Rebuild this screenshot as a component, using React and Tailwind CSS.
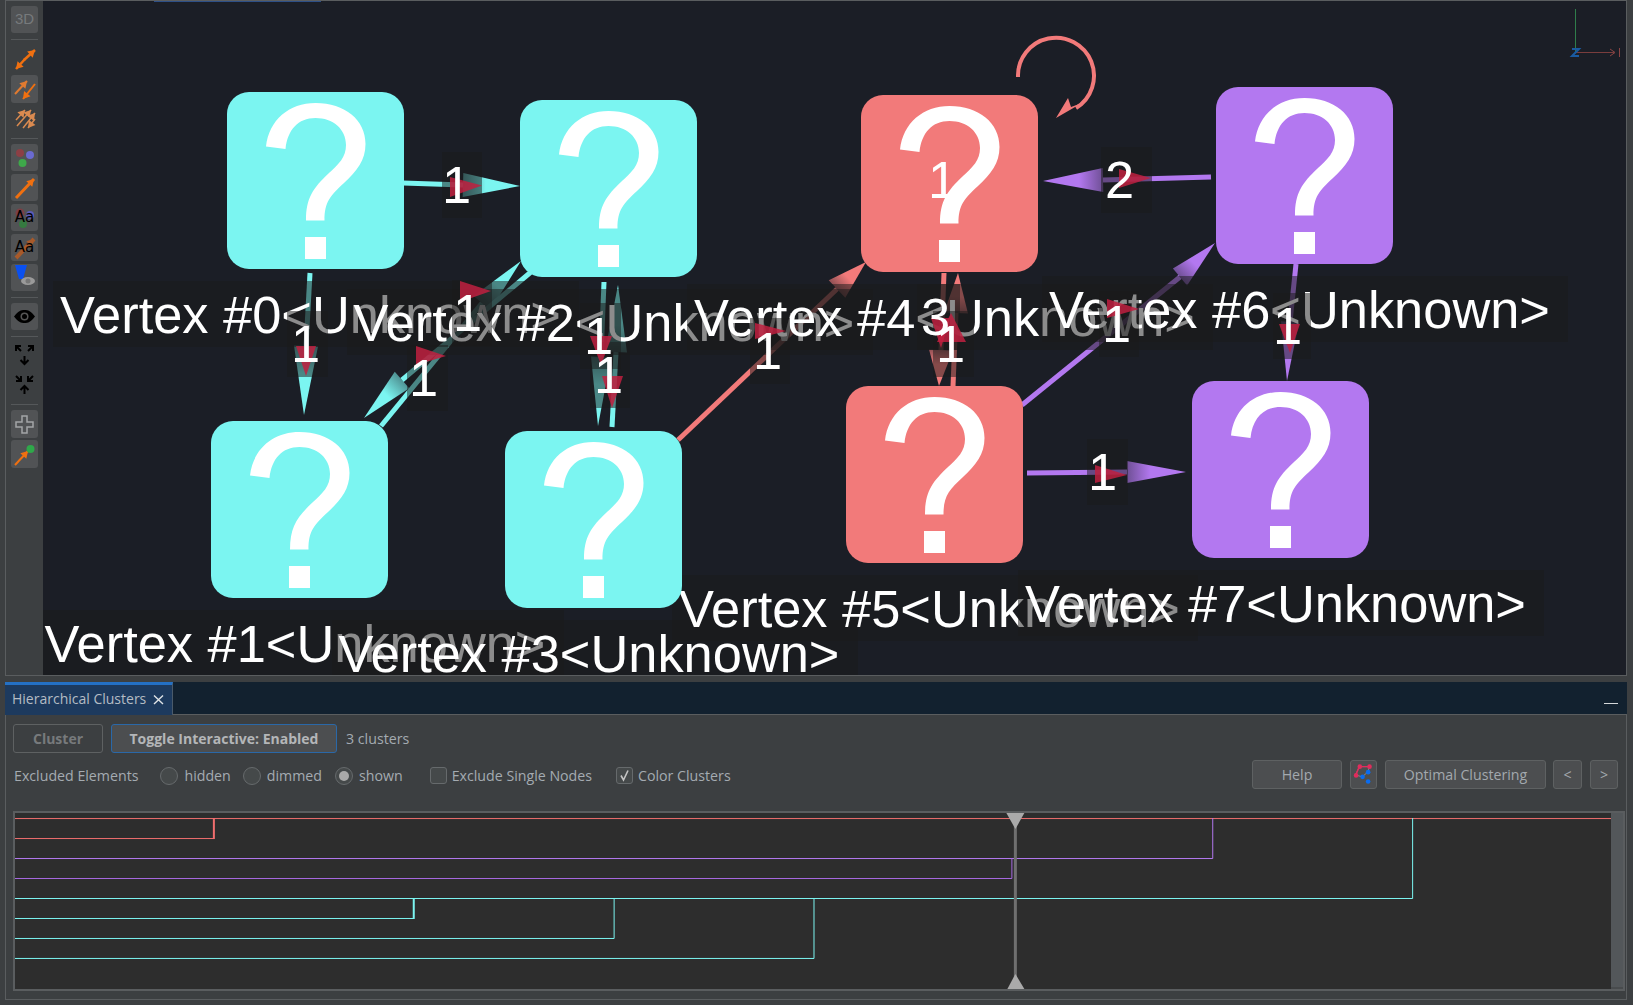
import React from 'react';

const CYAN = '#7bf5f1';
const SALMON = '#f27a7a';
const PURPLE = '#b378f0';

// graph positions are page pixels, the canvas starts at x=43 y=1
const OX = 43;
const OY = 1;

const vertices = [
  { id: 0, x: 226.5, y: 91.5, color: CYAN },
  { id: 1, x: 211, y: 421, color: CYAN },
  { id: 2, x: 520, y: 100, color: CYAN },
  { id: 3, x: 505, y: 431, color: CYAN },
  { id: 4, x: 860.5, y: 95, color: SALMON },
  { id: 5, x: 845.5, y: 386, color: SALMON },
  { id: 6, x: 1215.5, y: 86.5, color: PURPLE },
  { id: 7, x: 1191.5, y: 381, color: PURPLE },
];

// start, tip, centre of the head's base, half width of that base
const edges = [
  { from: [403, 183], tip: [520, 186], base: [463, 185], half: 12, color: CYAN },
  { from: [310, 273], tip: [304, 415], base: [306, 346], half: 12, color: CYAN },
  { from: [531, 272], tip: [364, 418], base: [402, 380], half: 11, color: CYAN },
  { from: [381, 426], tip: [521, 261], base: [482, 303], half: 11, color: CYAN },
  { from: [604, 282], tip: [598, 426], base: [601, 357], half: 10, color: CYAN },
  { from: [612, 427], tip: [618, 285], base: [616, 352], half: 11, color: CYAN },
  { from: [678, 440], tip: [866, 262], base: [837, 289], half: 12, color: SALMON },
  { from: [1022, 405], tip: [1215, 243], base: [1180, 277], half: 11, color: PURPLE },
  { from: [1296, 264], tip: [1287, 381], base: [1290, 322], half: 9, color: PURPLE },
  { from: [1027, 473], tip: [1186, 472], base: [1127, 472], half: 11, color: PURPLE },
  { from: [1211, 177], tip: [1043, 181], base: [1103, 180], half: 12, color: PURPLE },
  { from: [944, 273], tip: [939, 386], base: [941, 350], half: 12, color: SALMON },
  { from: [953, 386], tip: [958, 273], base: [956, 313], half: 12, color: SALMON },
];

const redMarks = [
  '450,177 482,185.5 450,197',
  '296,346 316,346 306,376',
  '460,281 491,291 460,302',
  '416,346 446,356 416,365',
  '590,336 612,336 601,365',
  '602,376 623,376 612,408',
  '755,323 786,331 755,339',
  '1107,299 1139,309 1107,318',
  '1279,324 1300,324 1290,353',
  '1095,465 1127,475 1095,483',
  '1119,169 1151,178 1119,188',
  '931,318 950,318 941,348',
  '937,342 966,342 951,313',
];

// box left, box right, box centre y, text left
const edgeLabels = [
  { l: 442, r: 482, cy: 184.5, tx: 442, text: '1' },
  { l: 287, r: 328, cy: 344, tx: 291, text: '1' },
  { l: 452, r: 492, cy: 313, tx: 453, text: '1' },
  { l: 407, r: 448, cy: 378, tx: 409, text: '1' },
  { l: 580, r: 621, cy: 336, tx: 584, text: '1' },
  { l: 590, r: 630, cy: 375, tx: 594, text: '1' },
  { l: 750, r: 790, cy: 351, tx: 753, text: '1' },
  { l: 1099, r: 1139, cy: 324, tx: 1102, text: '1' },
  { l: 1273, r: 1311, cy: 326, tx: 1273, text: '1' },
  { l: 1087, r: 1128, cy: 472, tx: 1088, text: '1' },
  { l: 1101, r: 1152, cy: 180, tx: 1105, text: '2' },
  { l: 917, r: 960, cy: 317, tx: 921, text: '3' },
  { l: 933, r: 974, cy: 344, tx: 936, text: '1' },
  { cy: 180, tx: 928, text: '1' },
];

function headPoints(e) {
  const dx = e.tip[0] - e.from[0];
  const dy = e.tip[1] - e.from[1];
  const len = Math.hypot(dx, dy);
  const nx = (-dy / len) * e.half;
  const ny = (dx / len) * e.half;
  return `${e.tip[0]},${e.tip[1]} ${e.base[0] + nx},${e.base[1] + ny} ${e.base[0] - nx},${e.base[1] - ny}`;
}

function Vertex({ v }) {
  return (
    <div
      className="absolute w-[177px] h-[177px] rounded-[22px]"
      style={{ left: v.x - OX, top: v.y - OY, backgroundColor: v.color }}
    >
      <svg width="177" height="177" viewBox="0 0 177 177">
        <path
          fill="#fff"
          d="M39 54.5C42 28 62 11 88.5 11C118 11 138.5 28 138.5 52C138.5 68 130 79 117 91C103 104 97.5 110 97.5 128.5L79 128.5C79 106 86 96 102 81C112 72 119 65 119 53C119 37 106 26 88.5 26C71 26 60.5 38 58.5 57Z"
        />
        <rect x="78" y="145" width="21" height="22" fill="#fff" />
      </svg>
    </div>
  );
}

function VertexLabel({ v }) {
  return (
    <div
      className="absolute w-[526px] h-[66px] pl-[7px] pt-px bg-[#1a1a1a]/50 text-white text-[52.4px] leading-[66px] whitespace-nowrap font-['Liberation_Sans',sans-serif]"
      style={{ left: v.x - 173.5 - OX, top: v.y + 177 + 12 - OY }}
    >
      Vertex #{v.id}&lt;Unknown&gt;
    </div>
  );
}

function GraphCanvas() {
  return (
    <div className="relative flex-1 bg-[#1b1e26] overflow-hidden">
      <svg className="absolute inset-0" width="1583" height="674" viewBox={`${OX} ${OY} 1583 674`}>
        <defs>
          {edges.map((e, i) => (
            <linearGradient
              key={i}
              id={`head${i}`}
              gradientUnits="userSpaceOnUse"
              x1={e.base[0]}
              y1={e.base[1]}
              x2={e.tip[0]}
              y2={e.tip[1]}
            >
              <stop offset="0" stopColor={e.color} stopOpacity="0.55" />
              <stop offset="0.4" stopColor={e.color} stopOpacity="1" />
            </linearGradient>
          ))}
        </defs>
        {edges.map((e, i) => (
          <g key={i}>
            <line x1={e.from[0]} y1={e.from[1]} x2={e.base[0]} y2={e.base[1]} stroke={e.color} strokeWidth="5" />
            <polygon points={headPoints(e)} fill={`url(#head${i})`} />
          </g>
        ))}
        <path d="M1018 77A38 38 0 1 1 1076 108" fill="none" stroke={SALMON} strokeWidth="4" />
        <polygon points="1056,118 1068,98 1071,107 1082,103" fill={SALMON} />
        <line x1="1575.5" y1="9" x2="1575.5" y2="52" stroke="#2f7d4a" />
        <line x1="1575" y1="52.5" x2="1614" y2="52.5" stroke="#7a3d3d" />
        <path d="M1610 49L1615 52.5L1610 56" fill="none" stroke="#8a4444" />
        <line x1="1619.5" y1="48" x2="1619.5" y2="57" stroke="#8a4444" />
        <path d="M1572 49H1579L1572 56H1579" fill="none" stroke="#1a5aa0" strokeWidth="2" />
      </svg>
      {vertices.map((v) => (
        <VertexLabel key={v.id} v={v} />
      ))}
      {vertices.map((v) => (
        <Vertex key={v.id} v={v} />
      ))}
      {edgeLabels.filter((b) => b.l).map((b, i) => (
        <div
          key={i}
          className="absolute h-[66px] bg-[#1a1a1a]/50"
          style={{ left: b.l - OX, width: b.r - b.l, top: b.cy - 33 - OY }}
        />
      ))}
      <svg className="absolute inset-0" width="1583" height="674" viewBox={`${OX} ${OY} 1583 674`}>
        {redMarks.map((p, i) => (
          <polygon key={i} points={p} fill="#c0203f" fillOpacity="0.85" />
        ))}
      </svg>
      {edgeLabels.map((b, i) => (
        <div
          key={i}
          className="absolute text-white text-[52.4px] leading-[66px] font-['Liberation_Sans',sans-serif]"
          style={{ left: b.tx - OX, top: b.cy - 33 - OY }}
        >
          {b.text}
        </div>
      ))}
      <div className="absolute top-0 left-[111px] w-[167px] h-px bg-[#2d4f86]" />
    </div>
  );
}

function ToolBtn({ children, plain, size = 'h-[27px]', className = '' }) {
  return (
    <div
      className={`w-[27px] shrink-0 flex items-center justify-center rounded-[3px] ${size} ${plain ? '' : 'bg-[#515355]'} ${className}`}
    >
      {children}
    </div>
  );
}

function Sep({ className = '' }) {
  return <div className={`w-[27px] h-px shrink-0 bg-[#55585a] ${className}`} />;
}

function Arrow({ x1, y1, x2, y2, color = '#f07010', w = 2.5 }) {
  const a = Math.atan2(y2 - y1, x2 - x1);
  const p = (r, t) => `${x2 + r * Math.cos(a + t)},${y2 + r * Math.sin(a + t)}`;
  return (
    <g>
      <line x1={x1} y1={y1} x2={x2} y2={y2} stroke={color} strokeWidth={w} />
      <polygon points={`${x2},${y2} ${p(8, 2.6)} ${p(8, -2.6)}`} fill={color} />
    </g>
  );
}

function Icon({ children }) {
  return (
    <svg width="27" height="27" viewBox="0 0 27 27" className="shrink-0">
      {children}
    </svg>
  );
}

function AaText() {
  return (
    <span className="relative text-black text-[15px] leading-none font-['DejaVu_Sans',sans-serif]">Aa</span>
  );
}

function BlackExpand({ inward }) {
  return (
    <svg width="27" height="24" viewBox="0 0 27 24" className="block">
      <g fill="none" stroke="#000" strokeWidth="2">
        {inward ? (
          <>
            <path d="M5 3L10 8M5 8H10V3" />
            <path d="M22 3L17 8M17 3V8H22" />
            <path d="M13.5 21V13M9.5 17L13.5 13L17.5 17" />
          </>
        ) : (
          <>
            <path d="M10 8L5 3M5 8V3H10" />
            <path d="M17 8L22 3M17 3H22V8" />
            <path d="M13.5 13V21M9.5 17L13.5 21L17.5 17" />
          </>
        )}
      </g>
    </svg>
  );
}

function Toolbar() {
  return (
    <div className="w-[37px] shrink-0 pl-[5px] pt-[5px] flex flex-col">
      <ToolBtn>
        <span className="text-[#777a7c] text-[15px] font-['Liberation_Sans',sans-serif]">3D</span>
      </ToolBtn>
      <Sep className="mt-[6px]" />
      <ToolBtn plain size="h-[18px]" className="mt-[10px]">
        <Icon>
          <Arrow x1={13} y1={14} x2={24} y2={4} />
          <Arrow x1={14} y1={13} x2={5} y2={23} />
        </Icon>
      </ToolBtn>
      <ToolBtn size="h-[28px]" className="mt-[7px]">
        <Icon>
          <Arrow x1={4} y1={18} x2={16} y2={5} color="#e07a30" w={2} />
          <Arrow x1={24} y1={8} x2={12} y2={23} color="#f07010" w={2} />
        </Icon>
      </ToolBtn>
      <ToolBtn plain size="h-[20px]" className="mt-[5px]">
        <Icon>
          <Arrow x1={5} y1={15} x2={14} y2={5} color="#d98a50" w={1.5} />
          <Arrow x1={6} y1={21} x2={20} y2={5} color="#d98a50" w={1.5} />
          <Arrow x1={12} y1={23} x2={24} y2={8} color="#d98a50" w={1.5} />
          <Arrow x1={24} y1={14} x2={17} y2={23} color="#d98a50" w={1.5} />
        </Icon>
      </ToolBtn>
      <Sep className="mt-[10px]" />
      <ToolBtn className="mt-[5px]">
        <Icon>
          <circle cx="9" cy="9" r="4" fill="#8c3f45" />
          <circle cx="19" cy="11" r="4" fill="#6a6ad0" />
          <circle cx="11.5" cy="19" r="4" fill="#3ea84a" />
        </Icon>
      </ToolBtn>
      <ToolBtn className="mt-[3px]">
        <Icon>
          <Arrow x1={5} y1={24} x2={23} y2={5} w={3} />
        </Icon>
      </ToolBtn>
      <ToolBtn className="mt-[3px] relative">
        <svg className="absolute inset-0" width="27" height="27" viewBox="0 0 27 27">
          <circle cx="9" cy="9" r="4.5" fill="#7c3f45" />
          <circle cx="19" cy="11" r="4" fill="#5c5cb8" />
          <circle cx="12" cy="20" r="4" fill="#357a40" />
        </svg>
        <AaText />
      </ToolBtn>
      <ToolBtn className="mt-[3px] relative">
        <svg className="absolute inset-0" width="27" height="27" viewBox="0 0 27 27">
          <Arrow x1={5} y1={24} x2={23} y2={5} color="#a85a2a" w={4} />
        </svg>
        <AaText />
      </ToolBtn>
      <ToolBtn className="mt-[3px]">
        <Icon>
          <polygon points="4,1 16,1 12,15 8,15" fill="#0a50f0" />
          <ellipse cx="17" cy="17" rx="7" ry="4" fill="#9a9a9a" />
          <circle cx="17" cy="17" r="2.5" fill="#777" />
        </Icon>
      </ToolBtn>
      <Sep className="mt-[6px]" />
      <ToolBtn className="mt-[5px]">
        <Icon>
          <path d="M3 13.5C7 8 10 7 13.5 7C17 7 20 8 24 13.5C20 19 17 20 13.5 20C10 20 7 19 3 13.5Z" fill="#000" />
          <circle cx="13.5" cy="13.5" r="4" fill="#555" />
          <circle cx="13.5" cy="13.5" r="2.5" fill="#000" />
        </Icon>
      </ToolBtn>
      <Sep className="mt-[6px]" />
      <div className="mt-[6px] shrink-0"><BlackExpand /></div>
      <div className="mt-[6px] shrink-0"><BlackExpand inward /></div>
      <Sep className="mt-[7px]" />
      <ToolBtn size="h-[28px]" className="mt-[5px]">
        <Icon>
          <path d="M11 5H16V11H22V16H16V22H11V16H5V11H11Z" fill="none" stroke="#a3a5a6" strokeWidth="1.5" />
        </Icon>
      </ToolBtn>
      <ToolBtn size="h-[28px]" className="mt-[2px]">
        <Icon>
          <Arrow x1={4} y1={24} x2={17} y2={10} w={2} />
          <circle cx="19.5" cy="8" r="4" fill="#2fa84a" />
        </Icon>
      </ToolBtn>
    </div>
  );
}

function Radio({ label, checked }) {
  return (
    <label className="flex items-center gap-[6px]">
      <span className="w-[18px] h-[18px] rounded-full border border-[#666a6c] bg-[#45494a] flex items-center justify-center">
        {checked && <span className="w-[10px] h-[10px] rounded-full bg-[#a9a9a9]" />}
      </span>
      {label}
    </label>
  );
}

function Check({ label, checked }) {
  return (
    <label className="flex items-center gap-[5px]">
      <span className="w-[17px] h-[17px] rounded-[3px] border border-[#666a6c] bg-[#45494a] flex items-center justify-center">
        {checked && (
          <svg width="13" height="13" viewBox="0 0 13 13">
            <path d="M3 6.5L5.5 11L10 1.5" fill="none" stroke="#c4c4c4" strokeWidth="1.6" />
          </svg>
        )}
      </span>
      {label}
    </label>
  );
}

function Dendrogram() {
  const paths = [
    { c: '#f06e6e', d: 'M15 818.5H1612' },
    { c: '#f06e6e', d: 'M15 838.5H214' },
    { c: '#f06e6e', d: 'M214 818V839', w: 2 },
    { c: '#b378f0', d: 'M15 858.5H1213.5V818' },
    { c: '#a668e0', d: 'M15 878.5H1012.5V858' },
    { c: '#7bf5f1', d: 'M15 898.5H1413.5V818' },
    { c: '#7bf5f1', d: 'M15 918.5H414' },
    { c: '#7bf5f1', d: 'M414 898V919', w: 2 },
    { c: '#7bf5f1', d: 'M15 938.5H614.5V898' },
    { c: '#7bf5f1', d: 'M15 958.5H814.5V898' },
  ];
  return (
    <div className="mt-[22px] ml-[7px] mr-px h-[180px] border-2 border-[#5a5d5f] bg-[#2d2d2d] flex">
      <svg className="flex-1" width="1597" height="176" viewBox="15 813 1597 176">
        {paths.map((p, i) => (
          <path key={i} d={p.d} fill="none" stroke={p.c} strokeWidth={p.w || 1} />
        ))}
        <rect x="1014.5" y="813" width="3" height="176" fill="#6f6f6f" />
        <polygon points="1007,813 1025,813 1016,829" fill="#aaaaaa" />
        <polygon points="1008,989 1025,989 1016,974" fill="#aaaaaa" />
      </svg>
      <div className="w-[12px] bg-[#53575a] border-b-2 border-[#484b4d]" />
    </div>
  );
}

function Dock() {
  const btn = 'h-[29px] flex items-center justify-center rounded-[3px] border border-[#5e6162] bg-[#4c4e50] text-[#a3a9ae]';
  return (
    <div className="mt-[6px] h-[318px] border-x border-b border-[#5a5d5f] font-['Open_Sans',sans-serif] text-[14.2px] text-[#a4abb1]">
      <div className="h-[33px] bg-[#12212f] border-b border-[#5a5d5f] flex justify-between -mx-px">
        <div className="w-[168px] h-[33px] pl-[7px] pb-[4px] bg-[#1d3a5e] border-t-[3px] border-[#2470c4] border-r border-r-[#4a5a6a] flex items-center gap-[7px] text-[#b4bcc4] text-[14px]">
          Hierarchical Clusters
          <svg width="11" height="11" viewBox="0 0 11 11" className="mt-[2px]">
            <path d="M1 1.5L10 10M10 1.5L1 10" stroke="#dfe3e6" strokeWidth="1.4" />
          </svg>
        </div>
        <div className="w-[14px] h-px bg-[#d5d8da] mt-[21px] mr-[9px]" />
      </div>
      <div className="mt-[9px] pl-[7px] flex items-center h-[29px]">
        <div className="w-[90px] h-[29px] pb-px flex items-center justify-center rounded-[3px] border border-[#5e6162] text-[#777a7c] font-bold text-[14px]">
          Cluster
        </div>
        <div className="ml-[8px] w-[226px] h-[29px] pb-px flex items-center justify-center rounded-[3px] border border-[#2a68a8] bg-[#4c4e50] text-[#b4b6b8] font-bold text-[14px]">
          Toggle Interactive: Enabled
        </div>
        <span className="ml-[9px]">3 clusters</span>
      </div>
      <div className="mt-[7px] pl-[8px] pr-[8px] flex justify-between h-[29px]">
        <div className="flex items-center pt-[3px]">
          <span>Excluded Elements</span>
          <div className="ml-[22px]"><Radio label="hidden" /></div>
          <div className="ml-[12px]"><Radio label="dimmed" /></div>
          <div className="ml-[13px]"><Radio label="shown" checked /></div>
          <div className="ml-[27px]"><Check label="Exclude Single Nodes" /></div>
          <div className="ml-[24px]"><Check label="Color Clusters" checked /></div>
        </div>
        <div className="flex items-center">
          <div className={`${btn} w-[90px]`}>Help</div>
          <div className={`${btn} w-[27px] ml-[8px]`}>
            <svg width="25" height="27" viewBox="0 0 27 29">
              <path d="M9 6H20L18 12L12 17L5 15Z" fill="none" stroke="#8a8a8a" strokeWidth="1" />
              <path d="M9 6L5 15M9 6H20" fill="none" stroke="#e02c5c" strokeWidth="1.5" />
              <circle cx="9.5" cy="6" r="2.5" fill="#e02c5c" />
              <circle cx="20" cy="6" r="2.5" fill="#e02c5c" />
              <circle cx="5.5" cy="15.5" r="2.5" fill="#e02c5c" />
              <circle cx="18.5" cy="12" r="2.5" fill="#0a6cf0" />
              <circle cx="12.5" cy="17" r="2.5" fill="#0a6cf0" />
              <circle cx="18.5" cy="22" r="2.5" fill="#0a6cf0" />
            </svg>
          </div>
          <div className={`${btn} w-[161px] ml-[8px]`}>Optimal Clustering</div>
          <div className={`${btn} w-[29px] ml-[7px]`}>&lt;</div>
          <div className={`${btn} w-[28px] ml-[8px]`}>&gt;</div>
        </div>
      </div>
      <Dendrogram />
    </div>
  );
}

export default function App() {
  return (
    <div className="w-[1633px] h-[1005px] bg-[#3c3f41] pl-[5px] pr-[6px] overflow-hidden">
      <div className="h-[676px] flex border border-[#5a5d5f]">
        <Toolbar />
        <GraphCanvas />
      </div>
      <Dock />
    </div>
  );
}
